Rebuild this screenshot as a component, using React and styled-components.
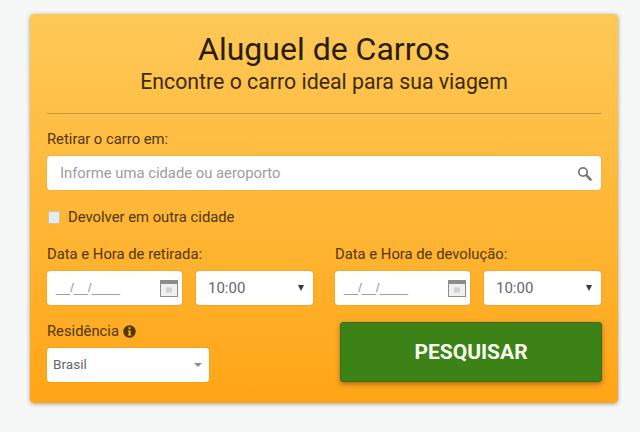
import styled, { createGlobalStyle } from "styled-components";

const GlobalStyle = createGlobalStyle`
  * { box-sizing: border-box; }
  html, body {
    margin: 0;
    background: #f6f7f7;
    font-family: Roboto, "Liberation Sans", sans-serif;
  }
`;

const Page = styled.main`
  width: 640px;
  height: 432px;
  padding: 14px 22px 0 30px;
  overflow: hidden;
`;

const Card = styled.form`
  height: 389px;
  padding: 17px 17px 0;
  border-radius: 4px;
  background: linear-gradient(180deg, #fec958 0%, #ffa516 100%);
  box-shadow: 0 1px 4px rgba(70, 50, 10, 0.45);
  color: #4f3500;
`;

const Title = styled.h1`
  margin: 0;
  font-size: 32px;
  line-height: 37px;
  font-weight: 400;
  text-align: center;
  color: #2b1d03;
`;

const Subtitle = styled.p`
  margin: 0;
  font-size: 21.3px;
  line-height: 28px;
  text-align: center;
  color: #3c2a05;
`;

const Divider = styled.hr`
  margin: 17px 0 16px;
  height: 1px;
  border: none;
  background: #c7943a;
`;

const Label = styled.label`
  display: flex;
  align-items: center;
  gap: 4px;
  height: 18px;
  font-size: 14.8px;
  color: #523700;
`;

const FieldBox = styled.div`
  display: flex;
  align-items: center;
  justify-content: space-between;
  height: 34px;
  width: ${(p) => p.$width || "100%"};
  padding: ${(p) => p.$padding || "0 9px 0 13px"};
  background: #fff;
  border-radius: 3px;
  box-shadow: 0 0 1px rgba(90, 60, 0, 0.6);
  font-size: 14.8px;
  color: #63676c;
`;

const SearchRow = styled.div`
  margin-top: 8px;
`;

const Placeholder = styled.span`
  color: #9b9da0;
`;

const CheckRow = styled.div`
  display: flex;
  align-items: center;
  gap: 8px;
  margin: 20px 0 0 1px;
  height: 14px;
  font-size: 14.8px;
  color: #523700;
`;

const CheckBox = styled.span`
  width: 12px;
  height: 13px;
  background: #e9e9e6;
  border: 1px solid #c6c4bc;
  border-radius: 2px;
`;

const DateColumns = styled.div`
  display: grid;
  grid-template-columns: 266px 266px;
  column-gap: 22px;
  margin-top: 21px;
`;

const DateFields = styled.div`
  display: flex;
  justify-content: space-between;
  margin-top: 8px;
`;

const Mask = styled.span`
  margin-left: -3px;
  font-family: "Liberation Sans", sans-serif;
  font-size: 12.4px;
  letter-spacing: 0.2px;
  color: #8f9195;
`;

const TimeText = styled.span`
  font-size: 15px;
`;

const CountryText = styled.span`
  margin-top: -3px;
  font-size: 13.6px;
`;

const Arrow = styled.span`
  width: 0;
  height: 0;
  margin-right: ${(p) => p.$inset || "-3px"};
  border-left: ${(p) => p.$half || "3.5px"} solid transparent;
  border-right: ${(p) => p.$half || "3.5px"} solid transparent;
  border-top: ${(p) => p.$tall || "6px"} solid ${(p) => p.$color || "#3a3a3a"};
`;

const BottomRow = styled.div`
  display: grid;
  grid-template-columns: 162px 262px;
  justify-content: space-between;
  align-items: start;
  margin: 17px -1px 0 0;
`;

const Residence = styled.div`
  & > div {
    margin-top: 8px;
  }
`;

const SearchButton = styled.button`
  height: 60px;
  padding: 0;
  border: 1px solid #356d13;
  border-radius: 3px;
  background: #3c8216;
  box-shadow: 0 2px 5px rgba(90, 50, 0, 0.5);
  color: #f8fff2;
  font-family: inherit;
  font-size: 21px;
  font-weight: 700;
`;

const CalendarIcon = () => (
  <svg width="18" height="17" viewBox="0 0 18 17">
    <rect x="0.5" y="0.5" width="17" height="16" fill="#efefef" stroke="#8c8c8c" />
    <rect x="0.5" y="0.5" width="17" height="3.5" fill="#8c8c8c" />
    <rect x="6" y="7.5" width="6" height="5" fill="#cfcfcf" />
  </svg>
);

const SearchIcon = () => (
  <svg width="15" height="15" viewBox="0 0 15 15" fill="none" stroke="#77797c">
    <circle cx="6" cy="6" r="4.2" strokeWidth="1.8" />
    <path d="M9.2 9.2 L13.5 13.5" strokeWidth="2.6" strokeLinecap="round" />
  </svg>
);

const InfoIcon = () => (
  <svg width="13" height="13" viewBox="0 0 13 13">
    <circle cx="6.5" cy="6.5" r="6.2" fill="#4f3500" />
    <rect x="5.5" y="2.2" width="2" height="2" fill="#ffb52d" />
    <path d="M4.8 5.4 H7.6 V9.4 H8.5 V10.6 H4.8 V9.4 H5.6 V6.6 H4.8 Z" fill="#ffb52d" />
  </svg>
);

const DateTimeField = ({ label }) => (
  <div>
    <Label>{label}</Label>
    <DateFields>
      <FieldBox $width="135px" $padding="0 4px 0 12px">
        <Mask>__/__/____</Mask>
        <CalendarIcon />
      </FieldBox>
      <FieldBox $width="117px" $padding="0 12px">
        <TimeText>10:00</TimeText>
        <Arrow />
      </FieldBox>
    </DateFields>
  </div>
);

export default function App() {
  return (
    <Page>
      <GlobalStyle />
      <Card>
        <Title>Aluguel de Carros</Title>
        <Subtitle>Encontre o carro ideal para sua viagem</Subtitle>
        <Divider />
        <Label>Retirar o carro em:</Label>
        <SearchRow>
          <FieldBox>
            <Placeholder>Informe uma cidade ou aeroporto</Placeholder>
            <SearchIcon />
          </FieldBox>
        </SearchRow>
        <CheckRow>
          <CheckBox />
          Devolver em outra cidade
        </CheckRow>
        <DateColumns>
          <DateTimeField label="Data e Hora de retirada:" />
          <DateTimeField label="Data e Hora de devolução:" />
        </DateColumns>
        <BottomRow>
          <Residence>
            <Label>
              Residência <InfoIcon />
            </Label>
            <FieldBox $padding="0 7px 0 6px">
              <CountryText>Brasil</CountryText>
              <Arrow $color="#8a8c90" $half="4px" $tall="4px" $inset="0" />
            </FieldBox>
          </Residence>
          <SearchButton type="button">PESQUISAR</SearchButton>
        </BottomRow>
      </Card>
    </Page>
  );
}
